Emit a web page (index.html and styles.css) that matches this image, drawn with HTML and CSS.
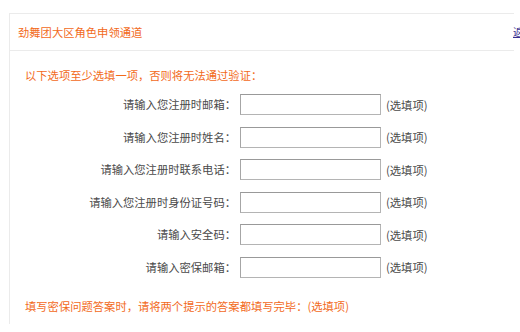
FILE: index.html
```html
<!DOCTYPE html>
<html lang="zh-CN">
<head>
    <meta charset="UTF-8">
    <title>劲舞团大区角色申领通道</title>
    <link rel="stylesheet" href="styles.css">
</head>
<body>
    <div class="panel">
        <div class="panel-head">
            <span class="panel-title">劲舞团大区角色申领通道</span>
            <a class="panel-more" href="#">返回</a>
        </div>
        <div class="panel-body">
            <p class="tip">以下选项至少选填一项，否则将无法通过验证：</p>
            <form class="apply-form">
                <label for="email">请输入您注册时邮箱：</label>
                <input type="text" id="email">
                <span class="optional">(选填项)</span>

                <label for="realname">请输入您注册时姓名：</label>
                <input type="text" id="realname">
                <span class="optional">(选填项)</span>

                <label for="phone">请输入您注册时联系电话：</label>
                <input type="text" id="phone">
                <span class="optional">(选填项)</span>

                <label for="idcard">请输入您注册时身份证号码：</label>
                <input type="text" id="idcard">
                <span class="optional">(选填项)</span>

                <label for="safecode">请输入安全码：</label>
                <input type="text" id="safecode">
                <span class="optional">(选填项)</span>

                <label for="safemail">请输入密保邮箱：</label>
                <input type="text" id="safemail">
                <span class="optional">(选填项)</span>
            </form>
            <p class="tip tip-bottom">填写密保问题答案时，请将两个提示的答案都填写完毕：(选填项)</p>
        </div>
    </div>
</body>
</html>
```

FILE: styles.css
```css
body {
    margin: 0;
    font-family: "Noto Sans CJK SC", "DejaVu Sans", sans-serif;
    font-size: 11.3px;
    color: #4a4a4a;
    background: #fff;
    overflow: hidden;
}
.panel {
    margin: 13px 0 0 9px;
    width: 504px;
    height: 310px;
    border-top: 1px solid #ebebeb;
    border-left: 1px solid #ebebeb;
}
.panel-head {
    height: 36px;
    display: flex;
    align-items: center;
    padding-left: 8px;
    border-bottom: 1px solid #ebebeb;
    position: relative;
}
.panel-title {
    color: #f26a1b;
}
.panel-more {
    position: absolute;
    left: 503px;
    top: 10px;
    font-size: 10px;
    color: #3a2f8f;
    text-decoration: underline;
    white-space: nowrap;
}
.panel-body {
    padding: 16px 0 0 15px;
}
.tip {
    margin: 0;
    line-height: 16px;
    color: #f26a1b;
}
.apply-form {
    display: grid;
    grid-template-columns: 211px 141px auto;
    column-gap: 4px;
    row-gap: 11.6px;
    align-items: center;
    margin-top: 11px;
}
.apply-form label {
    text-align: right;
    line-height: 21px;
}
.apply-form input {
    box-sizing: border-box;
    width: 141px;
    height: 21px;
    margin: 0;
    border: 1px solid #b4b4b4;
    border-top-color: #999;
    border-left-color: #a6a6a6;
    background: #fff;
}
.optional {
    margin-left: 1px;
}
.tip-bottom {
    margin-top: 20px;
}
```
